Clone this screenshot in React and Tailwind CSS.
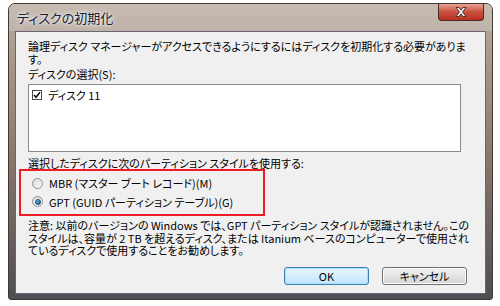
import React from "react";

const jp = { fontFamily: '"Noto Sans CJK JP", "Noto Sans", sans-serif', fontFeatureSettings: '"palt"' };

function CloseX() {
  return (
    <svg width="16" height="12" viewBox="0 0 16 12">
      <path d="M3 1.5h3l2 2.6 2-2.6h3l-3.5 4.5 3.5 4.5h-3l-2-2.6-2 2.6h-3l3.5-4.5z" fill="#f4f4f4" stroke="#3a2a28" strokeWidth="0.9" strokeLinejoin="round" />
    </svg>
  );
}

function Radio({ checked }) {
  return (
    <span className="w-[11px] h-[11px] rounded-full border border-[#8c8f94] bg-gradient-to-br from-[#dcdcdc] to-[#f8f8f8] flex items-center justify-center shrink-0">
      {checked && <span className="w-[6px] h-[6px] rounded-full bg-gradient-to-br from-[#7fc2ea] to-[#135f9c] border border-[#0d4c7e]" />}
    </span>
  );
}

export default function App() {
  return (
    <div className="w-[500px] h-[306px] bg-white overflow-hidden pt-[3px] pl-[8px]" style={jp}>
      {/* window frame */}
      <div className="w-[485px] h-[297px] rounded-t-[7px] rounded-b-[3px] border border-[#3f3833] bg-gradient-to-b from-[#b9aca2] via-[#8c796b] to-[#4f4d55] flex flex-col">
        {/* title bar */}
        <div className="h-[27px] flex items-start justify-between shrink-0 bg-gradient-to-b from-[#c7bbb1] to-[#bfb2a8] rounded-t-[6px]">
          <span className="pl-[8px] pt-[7px] text-[13px] leading-[14px] text-[#13213a] [text-shadow:0_0_6px_#ffffff,0_0_3px_#ffffff]">ディスクの初期化</span>
          <div className="mr-[8px] w-[46px] h-[17px] rounded-b-[4px] border border-t-0 border-[#4a2a24] bg-gradient-to-b from-[#e8a093] via-[#c9503f] to-[#b8301f] flex items-center justify-center">
            <CloseX />
          </div>
        </div>

        {/* client area */}
        <div className="mx-[6px] mb-[5px] flex-1 border border-[#6a6470] bg-[#f0f0f0] text-[11px] leading-[12.5px] text-black">
          <div className="pl-[12px] pt-[8px]">
            <div className="whitespace-nowrap">
              <span className="block">論理ディスク マネージャーがアクセスできるようにするにはディスクを初期化する必要がありま</span>
              <span className="block">す。</span>
            </div>
            <p className="mt-[3px] whitespace-nowrap">ディスクの選択(S):</p>

            <div className="mt-[3px] w-[433px] h-[68px] border border-[#828790] bg-white pt-[4px] pl-[3px]">
              <div className="flex items-center gap-[6px]">
                <span className="w-[10px] h-[10px] border border-[#4b4b4b] bg-white flex items-center justify-center">
                  <svg width="8" height="8" viewBox="0 0 8 8"><path d="M1 4l2 2.2L7 1.2" fill="none" stroke="#111" strokeWidth="1.6" /></svg>
                </span>
                <span>ディスク 11</span>
              </div>
            </div>

            <p className="mt-[5px] whitespace-nowrap">選択したディスクに次のパーティション スタイルを使用する:</p>

            <div className="ml-[-9px] mt-0 w-[246px] h-[47px] border-2 border-[#ee1c25] pl-[11px] pt-[6px] flex flex-col gap-[6px]">
              <div className="flex items-center gap-[6px]">
                <Radio />
                <span>MBR (マスター ブート レコード)(M)</span>
              </div>
              <div className="flex items-center gap-[6px]">
                <Radio checked />
                <span>GPT (GUID パーティション テーブル)(G)</span>
              </div>
            </div>

            <div className="mt-[3px] whitespace-nowrap">
              <span className="block">注意: 以前のバージョンの Windows では、GPT パーティション スタイルが認識されません。この</span>
              <span className="block">スタイルは、容量が 2 TB を超えるディスク、または Itanium ベースのコンピューターで使用され</span>
              <span className="block">ているディスクで使用することをお勧めします。</span>
            </div>
          </div>

          <div className="flex justify-end gap-[13px] pr-[18px] mt-[10px]">
            <button className="w-[85px] h-[18px] rounded-[3px] border border-[#3c7fb1] bg-gradient-to-b from-[#eaf6fd] to-[#bee6fd] text-[11px] leading-[16px] shadow-[inset_0_0_0_1px_#a8e0fb]">OK</button>
            <button className="w-[85px] h-[18px] rounded-[3px] border border-[#707070] bg-gradient-to-b from-[#f2f2f2] to-[#d5d5d5] text-[11px] leading-[16px] shadow-[inset_0_0_0_1px_#fcfcfc]">キャンセル</button>
          </div>
        </div>
      </div>
    </div>
  );
}
